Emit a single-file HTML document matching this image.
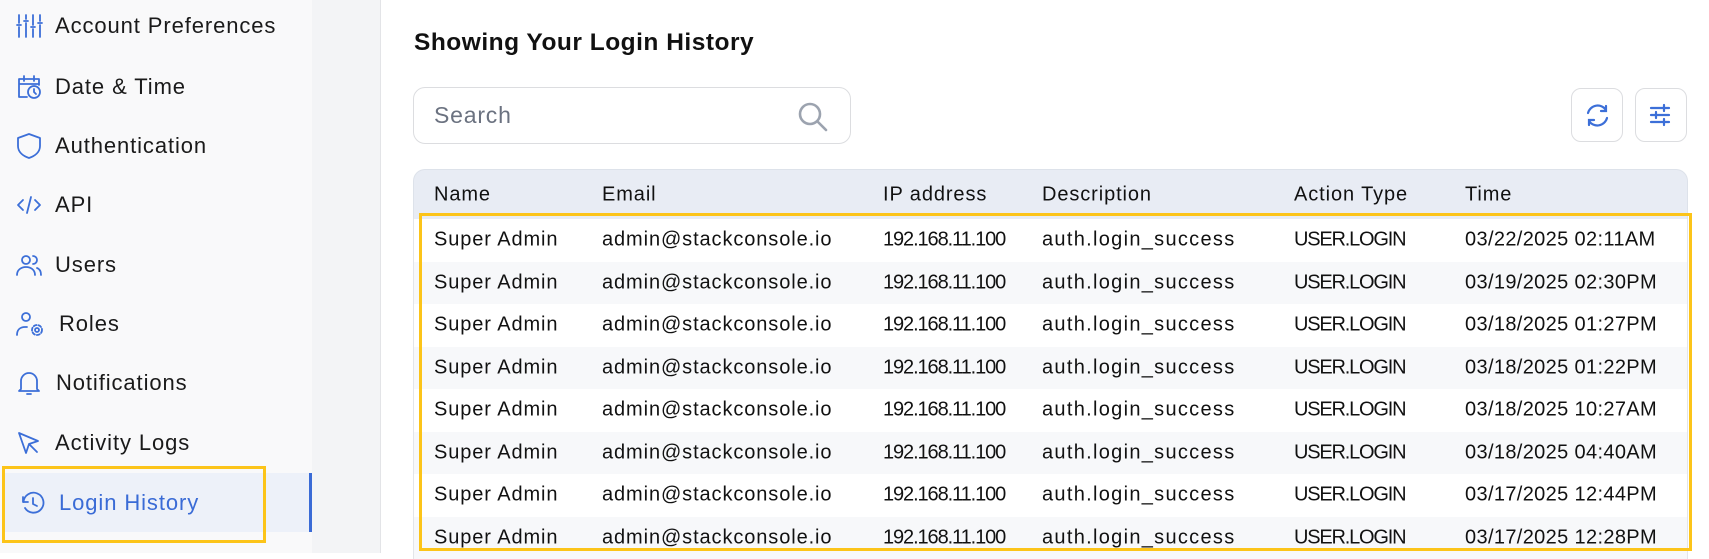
<!DOCTYPE html>
<html><head><meta charset="utf-8"><style>
*{margin:0;padding:0;box-sizing:border-box}
body{width:1709px;height:553px;overflow:hidden;background:#fff;font-family:"Liberation Sans",sans-serif;color:#111;position:relative}
.side{position:absolute;left:0;top:0;width:312px;height:553px;background:#f9f9fa}
.band{position:absolute;left:312px;top:0;width:69px;height:553px;background:#f3f4f6;border-right:1px solid #e3e4e7}
.item{position:absolute;left:0;width:312px;height:50px;display:flex;align-items:center;font-size:22px;letter-spacing:0.9px;color:#1a1a1a}
.item svg{position:absolute;left:15px;width:28px;height:28px;fill:none;stroke:#3c6fd8;stroke-width:1.8;stroke-linecap:round;stroke-linejoin:round}
.item span{position:absolute;left:55px}
.active{left:3px;width:309px;height:59px;background:#edf1f9;border-right:3px solid #3a6bd6;color:#3a6bd6}
.active span{left:56px}
.yl{position:absolute;border:3px solid #fcc419}
h1{position:absolute;left:414px;top:29px;font-size:24.5px;font-weight:bold;letter-spacing:0.5px}
.search{position:absolute;left:413px;top:87px;width:438px;height:57px;border:1px solid #dcdde0;border-radius:12px}
.search span{position:absolute;left:20px;top:14px;font-size:23px;color:#6b7280;letter-spacing:0.8px}
.btn{position:absolute;top:88px;width:52px;height:54px;border:1px solid #dcdde0;border-radius:10px}
.btn svg{position:absolute;left:12px;top:13px;width:27px;height:27px;fill:none;stroke:#3c6fd8;stroke-width:2.2;stroke-linecap:round}
.thead{position:absolute;left:413px;top:169px;width:1275px;height:50px;background:#e8ecf4;border:1px solid #dde2ea;border-bottom:none;border-radius:12px 12px 0 0}
.tbl{position:absolute;left:413px;top:219px;width:1275px;height:340px;border-left:1px solid #e3e5e9;border-right:1px solid #e3e5e9}
.row{position:absolute;left:0;width:100%;height:42.5px}
.row.g{background:#f7f8fa}
.c{position:absolute;font-size:20px;letter-spacing:0.9px;white-space:nowrap;top:50%;transform:translateY(-50%)}
.tbl .c:nth-child(3){letter-spacing:-1.1px}
.tbl .c:nth-child(4){letter-spacing:1.3px}
.tbl .c:nth-child(5){letter-spacing:-1.2px}
.tbl .c:nth-child(6){letter-spacing:0.35px}
</style></head><body>
<div class="side"></div><div class="band"></div>

<div class="item" style="top:1px"><svg viewBox="0 0 28 28"><path d="M4 3v8M4 15v10M2 13h4M11 3v4M11 11v14M9 9h4M18 3v10M18 17v8M16 15h4M25 3v6M25 13v12M23 11h4"/></svg><span>Account Preferences</span></div>
<div class="item" style="top:62px"><svg viewBox="0 0 28 28"><path d="M12 24H4V6h20v6M4 11h20M9 3v5M19 3v5"/><circle cx="19" cy="19" r="6"/><path d="M19 16v3l2 2"/></svg><span>Date &amp; Time</span></div>
<div class="item" style="top:121px"><svg viewBox="0 0 28 28"><path d="M14 2L3 6v8c0 6 5 10 11 12 6-2 11-6 11-12V6z"/></svg><span>Authentication</span></div>
<div class="item" style="top:180px"><svg viewBox="0 0 28 28"><path d="M8 9l-5 5 5 5M20 9l5 5-5 5M16 6l-4 16"/></svg><span>API</span></div>
<div class="item" style="top:240px"><svg viewBox="0 0 28 28"><circle cx="11" cy="9" r="4"/><path d="M2 24c0-5 4-8 9-8s9 3 9 8M18 5a4 4 0 010 8M22 17c3 1 4 4 4 7"/></svg><span>Users</span></div>
<div class="item" style="top:299px"><svg viewBox="0 0 32 28" style="width:32px"><circle cx="11" cy="7" r="4"/><path d="M2 25c0-5 3-8 8-8h2"/><circle cx="22" cy="20" r="2"/><circle cx="22" cy="20" r="5" stroke-dasharray="3 2"/></svg><span style="left:59px">Roles</span></div>
<div class="item" style="top:358px"><svg viewBox="0 0 28 28"><path d="M6 20V12a8 8 0 0116 0v8l2 2H4zM12 25h4"/></svg><span style="left:56px">Notifications</span></div>
<div class="item" style="top:418px"><svg viewBox="0 0 28 28"><path d="M4 4l7 20 3-9 9-3zM14 15l8 8"/></svg><span>Activity Logs</span></div>
<div class="item active" style="top:473px"><svg viewBox="0 0 28 28" style="left:16px"><path d="M4 8v5h5"/><path d="M4.5 13A10 10 0 1 1 6 19"/><path d="M14 9v6l4 2"/></svg><span>Login History</span></div>
<div class="yl" style="left:2px;top:466px;width:264px;height:77px"></div>

<h1>Showing Your Login History</h1>
<div class="search"><span>Search</span><svg style="position:absolute;left:382px;top:13px" width="34" height="32" viewBox="0 0 34 32" fill="none" stroke="#9ca3af" stroke-width="2.6" stroke-linecap="round"><circle cx="14" cy="13" r="10"/><path d="M22 21l8 8"/></svg></div>
<div class="btn" style="left:1571px"><svg viewBox="0 0 27 27"><path d="M4 11a10 10 0 0118-3M22 4v5h-5M23 16a10 10 0 01-18 3M5 23v-5h5"/></svg></div>
<div class="btn" style="left:1635px"><svg viewBox="0 0 27 27"><path d="M3 6h18M16 3v6M3 13h18M8 10v6M3 20h18M16 17v6"/></svg></div>

<div class="thead">
<div class="c" style="left:20px">Name</div><div class="c" style="left:188px">Email</div><div class="c" style="left:469px">IP address</div><div class="c" style="left:628px">Description</div><div class="c" style="left:880px">Action Type</div><div class="c" style="left:1051px">Time</div>
</div>
<div class="tbl">
<div class="row" style="top:0"><div class="c" style="left:20px">Super Admin</div><div class="c" style="left:188px">admin@stackconsole.io</div><div class="c" style="left:469px">192.168.11.100</div><div class="c" style="left:628px">auth.login_success</div><div class="c" style="left:880px">USER.LOGIN</div><div class="c" style="left:1051px">03/22/2025 02:11AM</div></div>
<div class="row g" style="top:42.5px"><div class="c" style="left:20px">Super Admin</div><div class="c" style="left:188px">admin@stackconsole.io</div><div class="c" style="left:469px">192.168.11.100</div><div class="c" style="left:628px">auth.login_success</div><div class="c" style="left:880px">USER.LOGIN</div><div class="c" style="left:1051px">03/19/2025 02:30PM</div></div>
<div class="row" style="top:85px"><div class="c" style="left:20px">Super Admin</div><div class="c" style="left:188px">admin@stackconsole.io</div><div class="c" style="left:469px">192.168.11.100</div><div class="c" style="left:628px">auth.login_success</div><div class="c" style="left:880px">USER.LOGIN</div><div class="c" style="left:1051px">03/18/2025 01:27PM</div></div>
<div class="row g" style="top:127.5px"><div class="c" style="left:20px">Super Admin</div><div class="c" style="left:188px">admin@stackconsole.io</div><div class="c" style="left:469px">192.168.11.100</div><div class="c" style="left:628px">auth.login_success</div><div class="c" style="left:880px">USER.LOGIN</div><div class="c" style="left:1051px">03/18/2025 01:22PM</div></div>
<div class="row" style="top:170px"><div class="c" style="left:20px">Super Admin</div><div class="c" style="left:188px">admin@stackconsole.io</div><div class="c" style="left:469px">192.168.11.100</div><div class="c" style="left:628px">auth.login_success</div><div class="c" style="left:880px">USER.LOGIN</div><div class="c" style="left:1051px">03/18/2025 10:27AM</div></div>
<div class="row g" style="top:212.5px"><div class="c" style="left:20px">Super Admin</div><div class="c" style="left:188px">admin@stackconsole.io</div><div class="c" style="left:469px">192.168.11.100</div><div class="c" style="left:628px">auth.login_success</div><div class="c" style="left:880px">USER.LOGIN</div><div class="c" style="left:1051px">03/18/2025 04:40AM</div></div>
<div class="row" style="top:255px"><div class="c" style="left:20px">Super Admin</div><div class="c" style="left:188px">admin@stackconsole.io</div><div class="c" style="left:469px">192.168.11.100</div><div class="c" style="left:628px">auth.login_success</div><div class="c" style="left:880px">USER.LOGIN</div><div class="c" style="left:1051px">03/17/2025 12:44PM</div></div>
<div class="row g" style="top:297.5px"><div class="c" style="left:20px">Super Admin</div><div class="c" style="left:188px">admin@stackconsole.io</div><div class="c" style="left:469px">192.168.11.100</div><div class="c" style="left:628px">auth.login_success</div><div class="c" style="left:880px">USER.LOGIN</div><div class="c" style="left:1051px">03/17/2025 12:28PM</div></div>
</div>
<div class="yl" style="left:419px;top:213px;width:1273px;height:338px"></div>
</body></html>
